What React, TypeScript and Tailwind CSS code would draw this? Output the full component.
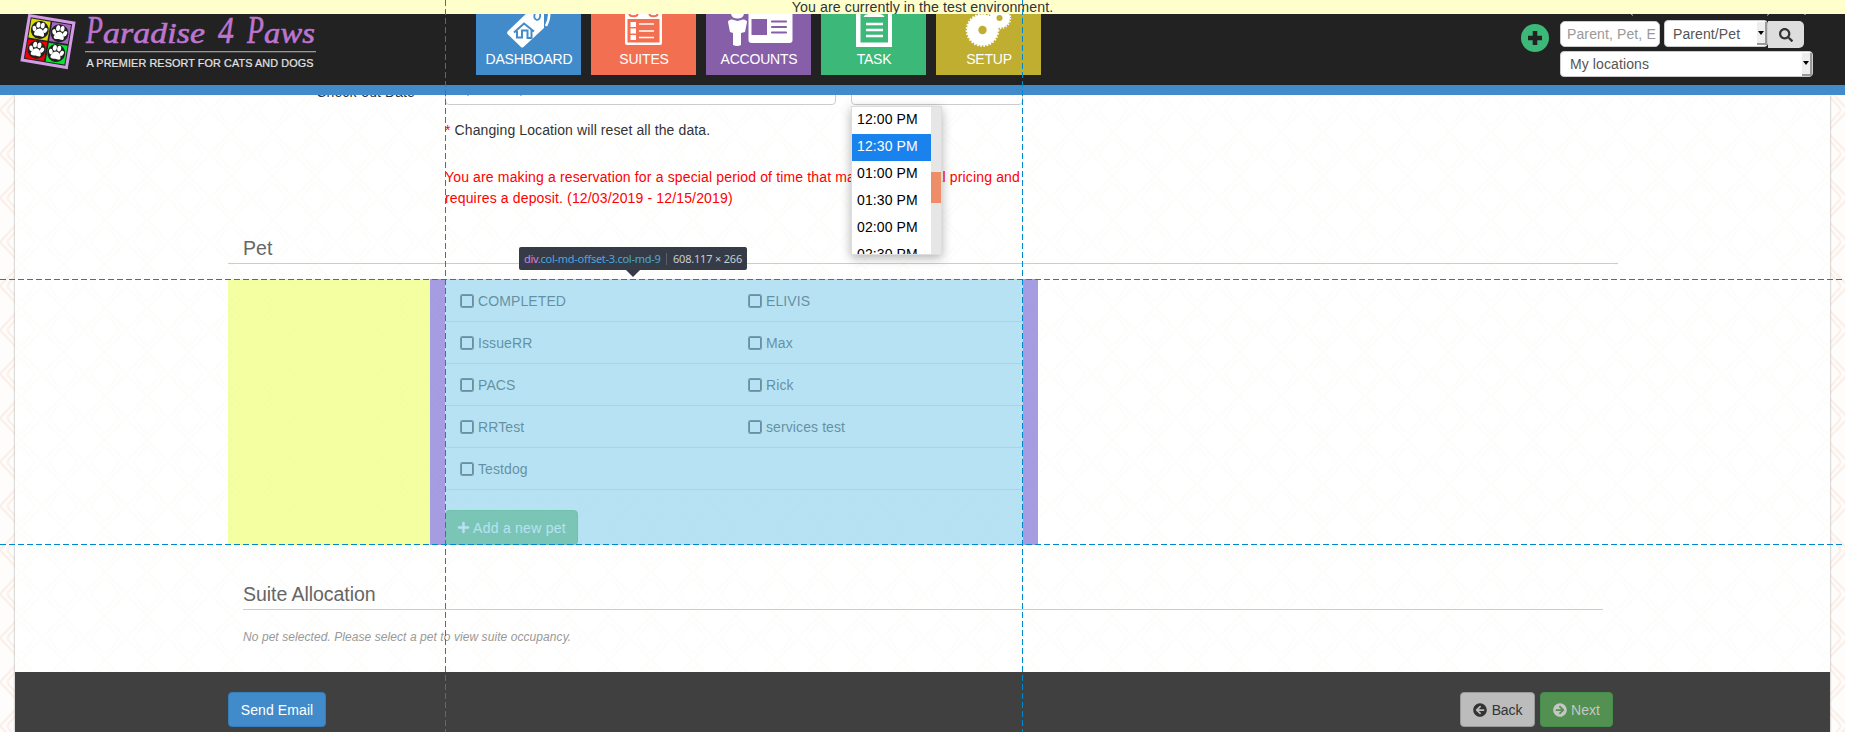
import React from "react";
import { FaPlus, FaSearch, FaArrowCircleLeft, FaArrowCircleRight } from "react-icons/fa";

const Paw = ({ x, y }: { x: number; y: number }) => (
  <g transform={`translate(${x} ${y})`}>
    <circle r="9" fill="#222" />
    <g fill="#fff">
      <ellipse cx="-5.5" cy="-0.5" rx="1.9" ry="2.8" transform="rotate(-20 -5.5 -.5)" />
      <ellipse cx="-2.2" cy="-4.8" rx="2" ry="2.9" />
      <ellipse cx="2.2" cy="-4.8" rx="2" ry="2.9" />
      <ellipse cx="5.5" cy="-0.5" rx="1.9" ry="2.8" transform="rotate(20 5.5 -.5)" />
      <path d="M0-1.5C3-1.5 5.500 3 5 5C4.500 7 1.500 6 0 5.800C-1.500 6-4.500 7-5 5C-5.500 3-3-1.500 0-1.500Z" />
    </g>
  </g>
);

const logoWords = [
  { t: "P", x: 86, w: 17, s: 40 },
  { t: "aradise", x: 103, w: 102, s: 29 },
  { t: "4", x: 218, w: 16, s: 38 },
  { t: "P", x: 247, w: 17, s: 40 },
  { t: "aws", x: 264, w: 51, s: 29 },
];

const Logo = () => (
  <svg width="330" height="71" viewBox="0 14 330 71" className="shrink-0">
    <g transform="translate(48 41.5) rotate(9.5)">
      <rect x="-24" y="-24" width="48" height="48" fill="#d59be6" />
      <rect x="-21" y="-21" width="42" height="42" fill="#222" />
      <rect x="-20" y="-20" width="19.3" height="19.3" fill="#d8dc00" />
      <rect x="1" y="-20" width="19" height="19.3" fill="#a765c4" />
      <rect x="-20" y="1" width="19.3" height="19" fill="#f20008" />
      <rect x="1" y="1" width="19" height="19" fill="#05e52c" />
      <Paw x={-10} y={-10} />
      <Paw x={10} y={-10} />
      <Paw x={-10} y={10} />
      <Paw x={10} y={10} />
    </g>
    {logoWords.map((w) => (
      <text key={w.x} x={w.x} y="43" textLength={w.w} lengthAdjust="spacingAndGlyphs" fill="#bd74cf" stroke="#bd74cf" strokeWidth=".6" fontStyle="italic" fontSize={w.s} fontFamily="'Liberation Serif', serif">{w.t}</text>
    ))}
    <rect x="85" y="51" width="231" height="1.3" fill="#999" />
    <text x="86.5" y="66.5" textLength="227" lengthAdjust="spacingAndGlyphs" fill="#e4e4e4" stroke="#e4e4e4" strokeWidth=".2" fontSize="10.5" fontFamily="'Liberation Sans', sans-serif">A PREMIER RESORT FOR CATS AND DOGS</text>
  </svg>
);

const DashboardIcon = () => (
  <svg width="105" height="36" viewBox="0 14 105 36">
    <path d="M54 10H68V28L47.500 47Q46 48 45 47L31.500 34Q30.500 32.500 32 31Z" fill="#fff" />
    <path d="M59 13Q57 19 61 20Q65 19 64 13" fill="none" stroke="#428bca" strokeWidth="1.800" />
    <path d="M73 12Q74 18 70 26" fill="none" stroke="#fff" strokeWidth="2.500" />
    <path d="M38 32.500L48 23.500L58 31.500M41 31V37.500H46V30.500H51.500V38H55.500V29.500" fill="none" stroke="#428bca" strokeWidth="2" />
  </svg>
);
const SuitesIcon = () => (
  <svg width="105" height="36" viewBox="0 14 105 36">
    <path d="M34 10H71V43Q71 45 69 45H36Q34 45 34 43Z" fill="#fff" />
    <rect x="36.500" y="19" width="32" height="23.500" fill="#f36f51" />
    <path d="M38.500 14a4 2.200 0 0 0 8 0M58.500 14a4 2.200 0 0 0 8 0" fill="none" stroke="#f36f51" strokeWidth="2" />
    <path d="M39.500 22h5.500v5h-5.500zM39.500 28.500h5.500v5h-5.500zM39.500 35h5.500v5h-5.500z" fill="#fff" />
    <path d="M48 24h15M48 31h15M48 37.500h15" stroke="#fff" strokeWidth="1.500" />
  </svg>
);
const AccountsIcon = () => (
  <svg width="105" height="36" viewBox="0 14 105 36">
    <path d="M25 14h13q-1 4.500-6.500 4.500T25 14ZM22 22q0-2 4-2.500l5.500 1.500 5.500-1.500q4 .5 4 2.500l-2 10-4 1v12q-3.500 2-8 0V33l-3-1Z" fill="#fff" />
    <path d="M42.500 10h44v30q0 3-3 3H45.500q-3 0-3-3Z" fill="#fff" />
    <path d="M45.500 19h15.500v16h-15.500z" fill="#875fa8" />
    <path d="M66 21.500h14M66 27h14M66 32.500h14" stroke="#875fa8" strokeWidth="2.200" strokeLinecap="round" />
  </svg>
);
const TaskIcon = () => (
  <svg width="105" height="36" viewBox="0 14 105 36">
    <path d="M35 10h36v37H35Z" fill="#fff" />
    <path d="M39.500 14H67V42.500H39.500Z" fill="#3cb878" />
    <path d="M42.500 17q1-3 6-3h9q5 0 6 3Z" fill="#fff" />
    <path d="M45 24h17M45 30h17M45 36h17" stroke="#fff" strokeWidth="2.500" />
  </svg>
);
const SetupIcon = () => (
  <svg width="105" height="36" viewBox="0 14 105 36">
    <circle cx="64" cy="18" r="10" fill="#fff" />
    <circle cx="64" cy="18" r="10.500" fill="none" stroke="#fff" strokeWidth="1.500" strokeDasharray="1.500 1.500" />
    <circle cx="46.500" cy="30" r="15.500" fill="#fff" />
    <circle cx="46.500" cy="30" r="16" fill="none" stroke="#fff" strokeWidth="1.700" strokeDasharray="1.700 1.500" />
    <circle cx="46.500" cy="30" r="4.200" fill="#bfae2f" />
    <circle cx="63.500" cy="18" r="3" fill="#bfae2f" />
  </svg>
);

const tiles = [
  { label: "DASHBOARD", color: "bg-[#428bca]", icon: <DashboardIcon /> },
  { label: "SUITES", color: "bg-[#f36f51]", icon: <SuitesIcon /> },
  { label: "ACCOUNTS", color: "bg-[#875fa8]", icon: <AccountsIcon /> },
  { label: "TASK", color: "bg-[#3cb878]", icon: <TaskIcon /> },
  { label: "SETUP", color: "bg-[#bfae2f]", icon: <SetupIcon /> },
];

const pets = [["COMPLETED", "ELIVIS"], ["IssueRR", "Max"], ["PACS", "Rick"], ["RRTest", "services test"], ["Testdog"]];
const times = ["12:00 PM", "12:30 PM", "01:00 PM", "01:30 PM", "02:00 PM", "02:30 PM"];

const Pattern = ({ id, stroke, shift }: { id: string; stroke: string; shift?: string }) => (
  <svg className="absolute inset-0 h-full w-full">
    <defs>
      <pattern id={id} width="42" height="44" patternUnits="userSpaceOnUse" patternTransform={shift}>
        <path
          d="M-2 24L19 2Q21 -1 23 2L44 24M-2 20L19 42Q21 45 23 42L44 20M19 8L9 19Q6.500 22 9 25L19 36Q21 38 23 36L33 25Q35.500 22 33 19L23 8Q21 6 19 8"
          fill="none"
          stroke={stroke}
          strokeWidth="2.500"
        />
      </pattern>
    </defs>
    <rect width="100%" height="100%" fill={`url(#${id})`} />
  </svg>
);

const Caret = () => (
  <span className="flex h-[23px] w-[10px] items-center justify-center border-r-2 border-b-2 border-[#999] bg-[#eee]">
    <svg width="6" height="4"><path d="M0 0H6L3 4Z" fill="#000" /></svg>
  </span>
);

const Highlighter = () => (
  <div className="pointer-events-none absolute inset-0 z-30">
    <div className="absolute top-[279px] left-[228px] flex h-[266px] w-[810px]">
      <div className="w-[202px] bg-[#edff64]/60" />
      <div className="w-[15px] bg-[#6a5acd]/60" />
      <div className="w-[578px] bg-[#87ceeb]/60" />
      <div className="w-[15px] bg-[#6a5acd]/60" />
    </div>
    <svg width="1845" height="732" className="absolute top-0 left-0">
      <path d="M445.500 0V732M1022.500 0V732M0 279.500H1845M0 544.500H1845" stroke="#08c" strokeWidth="1" strokeDasharray="6 3" />
    </svg>
    <div className="absolute top-[247px] left-[519px] flex h-[23px] w-[228px] items-center rounded-[2px] bg-[#353c48] pl-[5px] font-['Noto_Sans',sans-serif] text-[11px] whitespace-nowrap">
      <span className="w-[136px] tracking-[-.28px] text-[#4ba6de]"><span className="text-[#d57eea]">div</span>.col-md-offset-3.col-md-9</span>
      <span className="ml-[6px] h-[12px] w-px bg-[#5b616c]" />
      <span className="ml-[6px] tracking-[-.2px] text-[#c8ccd4]">608.117 × 266</span>
      <svg width="14" height="7" className="absolute top-[23px] left-[107px]"><path d="M0 0H14L7 7Z" fill="#353c48" /></svg>
    </div>
  </div>
);

export default function App() {
  return (
    <div className="relative h-[732px] w-[1855px] overflow-hidden bg-white font-['Liberation_Sans',sans-serif] text-[14px] leading-[20px] tracking-[.1px] text-[#333]">
      <div className="relative flex h-[732px] w-[1845px] flex-col bg-[#fefdfc]">
        <Pattern id="outer" stroke="#fbf0ea" />
        <div className="relative z-10 h-[14px] shrink-0 overflow-hidden bg-[#ffffcc]">
          <p className="-mt-[3px] text-center text-[14.2px] tracking-[.08px]">You are currently in the test environment.</p>
        </div>
        <header className="relative z-10 flex h-[81px] shrink-0 overflow-hidden border-b-[10px] border-[#428bca] bg-[#222]">
          <Logo />
          <nav className="ml-[146px] flex gap-[10px]">
            {tiles.map((t) => (
              <div key={t.label} className={`flex h-[61px] w-[105px] flex-col text-center tracking-[-.2px] text-white ${t.color}`}>
                {t.icon}
                <span className="-mt-[1px] pl-px leading-[20px]">{t.label}</span>
              </div>
            ))}
          </nav>
          <span className="mt-[10px] ml-[480px] flex h-7 w-7 items-center justify-center rounded-full bg-[#3cb878]">
            <svg width="14" height="14"><path d="M7 0V14M0 7H14" stroke="#222" strokeWidth="4.600" /></svg>
          </span>
          <div className="ml-[11px] flex flex-col">
            <svg width="253" height="6"><path d="M71.500 0l1 1.500M208.500 0l-1 1.500M245.500 0l-1 1" stroke="#ddd" /></svg>
            <div className="flex h-[28px] items-start">
              <div className="mt-px h-[26px] w-[100px] overflow-hidden rounded-[5px] border border-[#ccc] bg-white px-[6px] leading-[24px] tracking-[.12px] whitespace-nowrap text-[#999]">Parent, Pet, E</div>
              <div className="ml-1 flex h-[27px] w-[104px] items-center justify-between rounded-[4px] border border-[#ccc] bg-white pl-2 text-[#555]">Parent/Pet<Caret /></div>
              <div className="mt-px flex h-[27px] w-9 items-center justify-center rounded-r-[5px] bg-[#ddd] text-[14px]"><FaSearch /></div>
            </div>
            <div className="mt-[3px] flex h-[26px] w-[253px] items-center justify-between rounded-[4px] border border-[#ccc] bg-white pl-[9px] text-[#555]">My locations<Caret /></div>
          </div>
        </header>

        <main className="relative mx-[15px] flex grow flex-col bg-white shadow-[0_0_2px_#999]">
          <Pattern id="inner" stroke="#fdfdfc" shift="translate(-15 -7)" />
          <section className="relative h-[140px] shrink-0">
            <div className="flex h-[10px] overflow-hidden">
              <div className="-mt-[13px] w-[400px] text-right"><span>Check-out Date</span></div>
              <div className="-mt-[25px] ml-[30px] h-[35px] w-[391px] rounded-[4px] border border-[#ccc] bg-white pt-[8px] pl-[13px] text-[#555]">F, Dec 06, 2019</div>
              <div className="-mt-[25px] ml-[15px] h-[35px] w-[172px] rounded-[4px] border border-[#ccc] bg-white" />
            </div>
            <p className="mt-[15px] ml-[430px]"><span className="text-[#f00]">*</span> Changing Location will reset all the data.</p>
            <p className="mt-[27px] ml-[430px] w-[585px] leading-[21px] tracking-[.15px] text-[#f00]">You are making a reservation for a special period of time that may have special pricing and<br />requires a deposit. (12/03/2019 - 12/15/2019)</p>
            <div className="absolute top-[11px] left-[836px] z-20 flex h-[149px] w-[91px] overflow-hidden border border-[#ddd] bg-white text-black shadow-[0_3px_10px_rgba(0,0,0,.3)]">
              <div className="w-[79px]">
                {times.map((t, i) => (
                  <div key={t} className={`h-[27px] pl-[5px] leading-[25px] ${i === 1 ? "bg-[#1a82ec] text-white" : ""}`}>{t}</div>
                ))}
              </div>
              <div className="grow bg-[#e6e6e6] pt-[65px]"><div className="h-[31px] bg-[#ef8d68]" /></div>
            </div>
          </section>

          <section className="ml-[213px] w-[1390px]">
            <h2 className="relative h-[29px] border-b border-[#ccc] pl-[15px] text-[19.500px] leading-[26px] text-[#666]">Pet</h2>
            <div className="relative mt-[16px] ml-[217px] w-[578px]">
              {pets.map((row) => (
                <div key={row[0]} className="grid h-[42px] grid-cols-[288px_290px] items-center border-b border-[#ddd] bg-white">
                  {row.map((name) => (
                    <label key={name} className="flex items-center gap-[5px] pl-[16px]">
                      <span className="h-[12px] w-[12px] rounded-[1px] border-[1.5px] border-[#333] outline-[.5px] outline-[#555]" />
                      {name}
                    </label>
                  ))}
                </div>
              ))}
              <button className="mt-[20px] flex h-[35px] w-[133px] items-center justify-center gap-[3px] rounded-[4px] border border-[#4cae4c] bg-[#66b764] tracking-[.25px] text-white"><FaPlus className="text-[13px]" />Add a new pet</button>
            </div>
          </section>

          <section className="relative mt-[36px] ml-[228px] w-[1360px]">
            <h2 className="h-[29px] border-b border-[#ccc] text-[19.500px] leading-[26px] tracking-[-.05px] text-[#666]">Suite Allocation</h2>
            <p className="mt-[17px] text-[12px] tracking-[.07px] text-[#999] italic">No pet selected. Please select a pet to view suite occupancy.</p>
          </section>

          <footer className="relative mt-auto flex h-[60px] items-start bg-[#404040] pt-[20px] pl-[213px]">
            <button className="h-[35px] w-[98px] rounded-[4px] border border-[#357ebd] bg-[#428bca] tracking-[.1px] text-white">Send Email</button>
            <button className="ml-[1134px] flex h-[35px] w-[75px] items-center justify-center gap-[5px] rounded-[4px] border border-[#999] bg-[#bcbcbc] tracking-[-.1px] text-[#333]"><FaArrowCircleLeft />Back</button>
            <button className="ml-[5px] flex h-[35px] w-[73px] items-center justify-center gap-[4px] rounded-[4px] border border-[#44904a] bg-[#529152] tracking-[0px] text-[#c6c6c6]"><FaArrowCircleRight />Next</button>
          </footer>
        </main>
      </div>
      <Highlighter />
    </div>
  );
}
